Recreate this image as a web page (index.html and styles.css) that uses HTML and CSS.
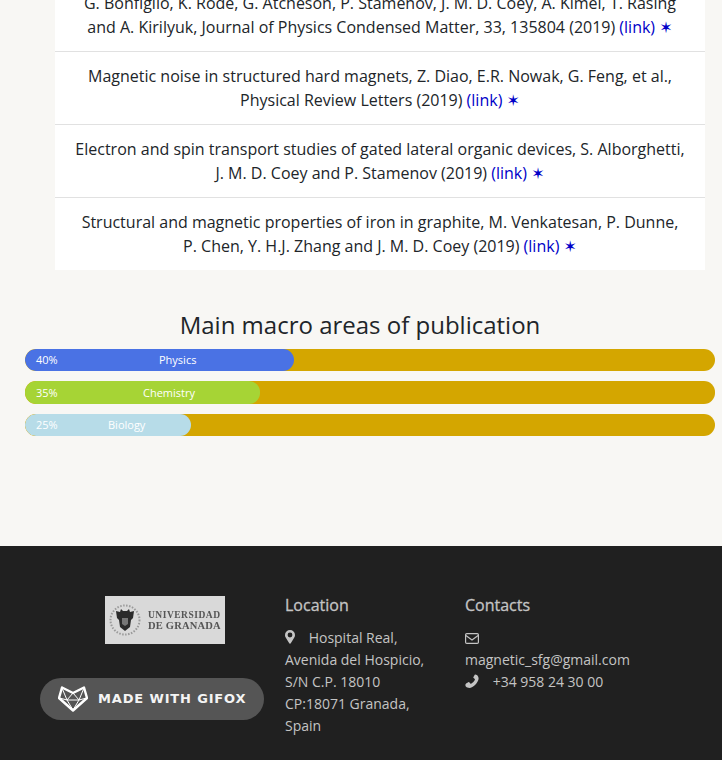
FILE: index.html
```html
<!DOCTYPE html>
<html lang="en">
<head>
<meta charset="utf-8">
<title>Publications</title>
<link rel="stylesheet" href="styles.css">
</head>
<body>
<main class="page">
  <ul class="pubs">
    <li class="pub">G. Bonfiglio, K. Rode, G. Atcheson, P. Stamenov, J. M. D. Coey, A. Kimel, T. Rasing and A. Kirilyuk, Journal of Physics Condensed Matter, 33, 135804 (2019) <a href="#">(link)</a> <span class="star">✶</span></li>
    <li class="pub">Magnetic noise in structured hard magnets, Z. Diao, E.R. Nowak, G. Feng, et al., Physical Review Letters (2019) <a href="#">(link)</a> <span class="star">✶</span></li>
    <li class="pub">Electron and spin transport studies of gated lateral organic devices, S. Alborghetti, J. M. D. Coey and P. Stamenov (2019) <a href="#">(link)</a> <span class="star">✶</span></li>
    <li class="pub">Structural and magnetic properties of iron in graphite, M. Venkatesan, P. Dunne, P. Chen, Y. H.J. Zhang and J. M. D. Coey (2019) <a href="#">(link)</a> <span class="star">✶</span></li>
  </ul>
  <section class="areas">
    <h2 class="areas-title">Main macro areas of publication</h2>
    <div class="bar"><div class="fill fill-physics" style="width:39%"><span class="pct">40%</span><span class="label label-physics">Physics</span></div></div>
    <div class="bar bar-tall"><div class="fill fill-chemistry" style="width:34%"><span class="pct">35%</span><span class="label label-chemistry">Chemistry</span></div></div>
    <div class="bar"><div class="fill fill-biology" style="width:24%"><span class="pct">25%</span><span class="label label-biology">Biology</span></div></div>
  </section>
</main>
<footer class="footer">
  <div class="brand">
    <svg class="ugr" width="120" height="48" viewBox="0 0 120 48" role="img" aria-label="Universidad de Granada">
      <rect width="120" height="48" fill="#d9d9d9"/>
      <circle cx="20" cy="24" r="14.500" fill="none" stroke="#9a9a9a" stroke-width="2" stroke-dasharray="1.500 1.500"/>
      <path d="M11 15l4 1 1-3 2 2h4l2-2 1 3 4-1-1 7-2 2-1 7-5 4-5-4-1-7-2-2z" fill="#2b2b2b"/>
      <path d="M17 22h6v6l-3 2-3-2z" fill="#777"/>
      <text class="ugr-text" x="43" y="22">UNIVERSIDAD</text>
      <text class="ugr-text ugr-text-big" x="43" y="33">DE GRANADA</text>
    </svg>
    <div class="gifox">
      <svg class="fox" width="30" height="26" viewBox="0 0 30 26" aria-hidden="true">
        <path d="M4 1.500 15 7 26 1.500 29 12 15 24.500 1 12z" fill="none" stroke="#fff" stroke-width="2.400" stroke-linejoin="round"/>
        <path d="M1.500 12 9 14 15 24 21 14 28.500 12M4 2 9 14H21L26 2M9 14 15 7 21 14" fill="none" stroke="#fff" stroke-width="1"/>
      </svg>
      <span class="gifox-text">MADE WITH GIFOX</span>
    </div>
  </div>
  <div class="col col-location">
    <h3 class="col-title">Location</h3>
    <p class="col-text">
      <svg class="ico ico-pin" width="10" height="14" viewBox="0 0 10 14" aria-hidden="true"><path fill-rule="evenodd" d="M5 0a5 5 0 0 1 5 5c0 1.200-.3 1.800-.7 2.600L5.800 13.200a.9.900 0 0 1-1.600 0L.7 7.600C.3 6.800 0 6.200 0 5a5 5 0 0 1 5-5zm0 2.600a2.400 2.400 0 1 0 0 4.800 2.400 2.400 0 0 0 0-4.800z" fill="#c4c4c4"/></svg>
      Hospital Real, Avenida del Hospicio, S/N C.P. 18010 CP:18071 Granada, Spain
    </p>
  </div>
  <div class="col col-contacts">
    <h3 class="col-title">Contacts</h3>
    <p class="col-text">
      <svg class="ico ico-mail" width="14" height="11" viewBox="0 0 14 11" aria-hidden="true"><rect x=".6" y=".6" width="12.800" height="9.800" rx="1.200" fill="none" stroke="#c4c4c4" stroke-width="1.200"/><path d="M.9 2.600 7 7l6.100-4.400" fill="none" stroke="#c4c4c4" stroke-width="1.200"/></svg>
      magnetic_sfg@gmail.com<br>
      <svg class="ico ico-phone" width="14" height="14" viewBox="0 0 14 14" aria-hidden="true"><path transform="matrix(-1 0 0 1 14.300 0)" d="M14 10.700c0 .4-.2 1.100-.4 1.500-.2.600-1.300 1.100-1.800 1.400-.6.300-1.200.4-1.800.4-1.900 0-4.200-1.500-6-3.300C2.200 8.900.7 6.500.7 4.600c0-.6.100-1.200.4-1.800.3-.5.800-1.600 1.400-1.800C2.900.800 3.600.6 4 .6h.3c.3.100.6.800.8 1.100.3.500.6 1.100.9 1.600.3.500-1 1.200-1.400 1.700-.3.400-.4.600-.1 1.100.8 1.500 1.900 2.600 3.400 3.400.5.300.7.200 1.100-.1.500-.4 1.200-1.700 1.700-1.400.5.300 1.100.6 1.600.9.300.2 1 .5 1.100.8.100.1.100.2.100.4z" fill="#c4c4c4"/></svg>
      <span class="phone">+34 958 24 30 00</span>
    </p>
  </div>
</footer>
</body>
</html>
```
FILE: styles.css
```css
* { box-sizing: border-box; }
html, body { margin: 0; padding: 0; }
body {
  height: 760px;
  overflow: hidden;
  background: #f8f7f4;
  font-family: "Open Sans", sans-serif;
  font-size: 16px;
  line-height: 24px;
  color: #212529;
}
.page {
  height: 567px;
  margin-top: -21px;
}
.pubs {
  list-style: none;
  margin: 0 17px 0 55px;
  padding: 0;
  background: #fff;
}
.pub {
  padding: 12px 18px;
  text-align: center;
  border-top: 1px solid #e1e1e1;
}
.pub:first-child { border-top: 0; }
.pub a { color: #0000c8; text-decoration: none; }
.star {
  color: #0000c8;
  font-family: "DejaVu Sans", sans-serif;
  line-height: 1;
}
.areas-title {
  margin: 39px 2px 8px 0;
  font-size: 24px;
  line-height: 32px;
  font-weight: 400;
  text-align: center;
  color: #212529;
}
.bar {
  height: 22px;
  margin: 0 7px 10px 25px;
  border-radius: 11px;
  background: #d4a600;
  overflow: hidden;
}
.bar-tall { height: 23px; }
.fill {
  display: flex;
  align-items: center;
  height: 100%;
  padding-left: 11px;
  border-radius: 11px;
  color: #fff;
  font-size: 11px;
  line-height: 16px;
  white-space: nowrap;
}
.fill-physics { background: #4a72e4; }
.fill-chemistry { background: #a6d435; }
.fill-biology { background: #b7dce8; }
.pct { width: 22px; }
.label-physics { margin-left: 101px; }
.label-chemistry { margin-left: 85px; }
.label-biology { margin-left: 50px; }
.footer {
  display: flex;
  height: 214px;
  padding-top: 47px;
  background: #202020;
  color: #c4c4c4;
  font-size: 14px;
  line-height: 22px;
}
.brand {
  display: flex;
  flex-direction: column;
  align-items: center;
  width: 224px;
  margin: 3px 21px 0 40px;
}
.ugr { display: block; margin-left: 26px; filter: blur(.3px); }
.ugr-text { font-family: "Liberation Serif", serif; font-size: 9.500px; font-weight: 700; fill: #555; letter-spacing: .5px; }
.ugr-text-big { font-size: 10.500px; letter-spacing: .2px; }
.gifox {
  display: flex;
  align-items: center;
  width: 224px;
  height: 42px;
  margin-top: 34px;
  padding-left: 18px;
  border-radius: 21px;
  background: #555;
}
.fox { flex: none; }
.gifox-text {
  margin-left: 10px;
  font-family: "DejaVu Sans", sans-serif;
  font-size: 13px;
  font-weight: 700;
  letter-spacing: .85px;
  color: #f4f4f4;
  white-space: nowrap;
}
.col-title {
  margin: 0 0 10px;
  font-size: 16px;
  line-height: 24px;
  font-weight: 500;
  color: #c4c4c4;
  -webkit-text-stroke: .3px #c4c4c4;
}
.col-text { margin: 0; }
.col-location { width: 150px; margin-right: 30px; }
.col-contacts { width: 170px; }
.ico { display: inline-block; }
.ico-pin { margin-right: 10px; vertical-align: -1px; }
.ico-mail { vertical-align: -1px; }
.ico-phone { margin-right: 10px; vertical-align: -1px; }
```
